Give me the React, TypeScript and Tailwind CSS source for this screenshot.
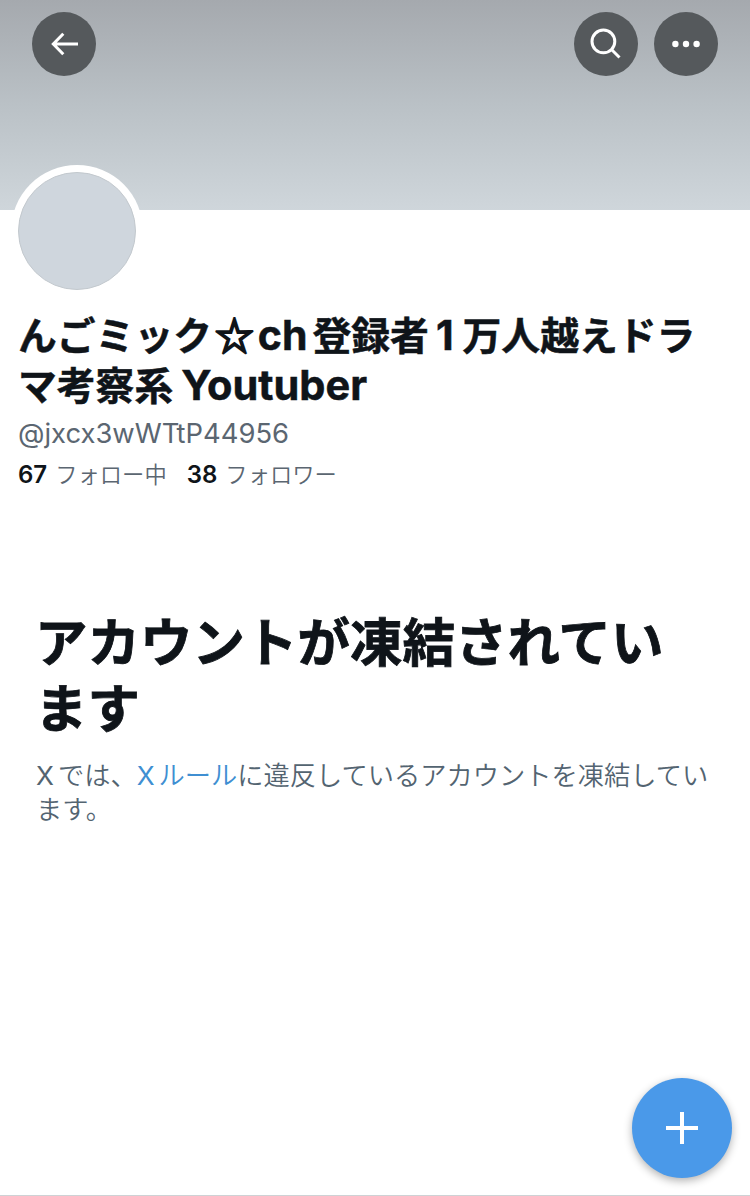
const latin = "font-['Inter','Noto_Sans_CJK_JP',sans-serif]";

const stats = [
  { count: "67", label: "フォロー中" },
  { count: "38", label: "フォロワー" },
];

function Header() {
  return (
    <header className="h-[210px] bg-linear-to-b from-[#a5a9ae] via-[#bac1c6] to-[#cfd6db] px-8 pt-3">
      <div className="flex items-center justify-between text-white">
        <button className="flex size-16 items-center justify-center rounded-full bg-[#55595c]" aria-label="戻る">
          <svg className="size-16" viewBox="0 0 64 64" fill="none" stroke="currentColor" strokeWidth="3">
            <path d="M46 32H21.5M31.3 21.8L21.3 32l10 10.2" />
          </svg>
        </button>
        <div className="flex gap-4">
          <button className="flex size-16 items-center justify-center rounded-full bg-[#55595c]" aria-label="検索">
            <svg className="size-16" viewBox="0 0 64 64" fill="none" stroke="currentColor" strokeWidth="3">
              <circle cx="29.4" cy="29.4" r="11.4" />
              <path d="M37.5 37.5l8 8" />
            </svg>
          </button>
          <button className="flex size-16 items-center justify-center rounded-full bg-[#55595c]" aria-label="もっと見る">
            <svg className="size-16" viewBox="0 0 64 64" fill="currentColor">
              <circle cx="21.4" cy="32" r="3.2" />
              <circle cx="32" cy="32" r="3.2" />
              <circle cx="42.6" cy="32" r="3.2" />
            </svg>
          </button>
        </div>
      </div>
    </header>
  );
}

function Profile() {
  return (
    <section className="px-[18px]">
      <div className="relative -mt-[45px] -ml-[7px] size-[132px] rounded-full bg-white p-[7px]">
        <div className="size-[118px] rounded-full border border-[#c3c9ce] bg-[#cfd6dd]" />
      </div>
      <h1 className={`${latin} mt-[13px] text-[38.8px] leading-[50px] font-bold whitespace-nowrap text-[#0f1419] [-webkit-text-stroke:0.5px]`}>
        <span className="block h-[50px]">
          んごミック
          <span className="ml-[3px] font-['Noto_Sans_CJK_JP',sans-serif] leading-none [-webkit-text-stroke:2px]">☆</span>
          <span className="ml-[4px] text-[41px]">ch</span>
          <span className="ml-[5px]">登録者</span>
          <span className="ml-[7px] text-[41px]">1</span>
          <span className="ml-[9px]">万人越えドラ</span>
        </span>
        <span className="block h-[50px]">
          マ考察系<span className="ml-2 text-[41.5px]">Youtuber</span>
        </span>
      </h1>
      <p className={`${latin} h-[46px] text-[27.4px] leading-[46px] text-[#5b6671]`}>@jxcx3wWTtP44956</p>
      <div className="flex h-9 items-center gap-5 text-[22.3px] leading-9 text-[#5b6671]">
        {stats.map((s) => (
          <p key={s.label} className="flex items-baseline gap-2 whitespace-nowrap">
            <span className={`${latin} text-[24px] font-semibold text-[#0f1419]`}>{s.count}</span>
            <span className="font-[350]">{s.label}</span>
          </p>
        ))}
      </div>
    </section>
  );
}

function Suspended() {
  return (
    <section className="mt-[118px] pl-[36px] whitespace-nowrap">
      <h2 className={`${latin} -ml-px text-[52.5px] leading-[66px] font-bold text-[#0f1419] [-webkit-text-stroke:0.8px]`}>
        アカウントが凍結されてい
        <br />
        ます
      </h2>
      <p className="mt-[16px] text-[26.25px] leading-[33px] font-[350] text-[#536471]">
        <span className={`${latin} mr-1 font-normal`}>X</span>では、
        <a href="#rules" className="text-[#3f8fd2]">
          <span className={`${latin} mr-1 font-normal`}>X</span>ルール
        </a>
        に違反しているアカウントを凍結してい
        <br />
        ます。
      </p>
    </section>
  );
}

export default function App() {
  return (
    <div
      lang="ja"
      className="relative h-[1196px] w-[750px] overflow-hidden border-b border-[#ced2d5] bg-white font-['Noto_Sans_CJK_JP',sans-serif]"
    >
      <Header />
      <Profile />
      <Suspended />
      <button
        className="absolute right-[18px] bottom-[17px] flex size-[100px] items-center justify-center rounded-full bg-[#4a99e9] text-white shadow-[0_3px_9px_rgba(0,0,0,0.3)]"
        aria-label="投稿する"
      >
        <svg className="size-8" viewBox="0 0 32 32" fill="none" stroke="currentColor" strokeWidth="4">
          <path d="M16 0v32M0 16h32" />
        </svg>
      </button>
    </div>
  );
}
